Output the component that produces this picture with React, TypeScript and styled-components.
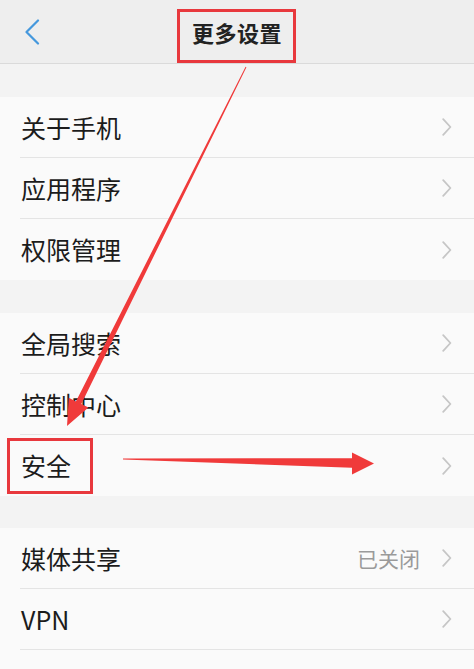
import React from "react";
import styled, { createGlobalStyle } from "styled-components";

const GlobalStyle = createGlobalStyle`
  html, body {
    margin: 0;
    padding: 0;
    background: #f3f3f3;
    overflow: hidden;
  }
  body {
    font-family: "Noto Sans CJK SC", "Noto Sans", sans-serif;
    -webkit-font-smoothing: antialiased;
  }
`;

const Screen = styled.div`
  position: relative;
  width: 474px;
  height: 669px;
  overflow: hidden;
  background: #f3f3f3;
`;

const Header = styled.header`
  box-sizing: border-box;
  height: 64px;
  display: grid;
  grid-template-columns: 80px 1fr 80px;
  align-items: center;
  background: #eeeeee;
  border-bottom: 1px solid #dadada;
`;

const BackButton = styled.div`
  display: flex;
  align-items: center;
  padding-left: 24px;
  height: 100%;
`;

const Title = styled.h1`
  margin: 0;
  text-align: center;
  font-size: 22px;
  font-weight: 700;
  color: #222;
  letter-spacing: 0.5px;
`;

const Gap = styled.div<{ h: number }>`
  height: ${(p) => p.h}px;
`;

const Group = styled.section<{ tail?: number }>`
  background: #fafafa;
  padding-bottom: ${(p) => p.tail ?? 0}px;
`;

const Row = styled.div<{ divider?: boolean }>`
  box-sizing: border-box;
  height: 61px;
  margin-left: 20px;
  padding: 0 22px 0 1px;
  display: flex;
  align-items: center;
  border-bottom: ${(p) => (p.divider ? "1px solid #e4e4e4" : "none")};
`;

const Label = styled.span`
  flex: 1;
  font-size: 25px;
  color: #1c1c1c;
  line-height: 1;
`;

const Value = styled.span`
  font-size: 21px;
  color: #9a9a9a;
  margin-right: 22px;
`;

const Overlay = styled.svg`
  position: absolute;
  top: 0;
  left: 0;
  pointer-events: none;
`;

const Chevron = () => (
  <svg width="10" height="18" viewBox="0 0 10 18">
    <polyline
      points="1.2,1.2 8.4,9 1.2,16.8"
      fill="none"
      stroke="#c6c6c6"
      strokeWidth="1.8"
      strokeLinecap="round"
      strokeLinejoin="round"
    />
  </svg>
);

type Item = { label: string; value?: string };

// last group continues below the fold, so its last visible row keeps a divider
const groups: { rows: Item[]; gap: number; more?: boolean }[] = [
  { rows: [{ label: "关于手机" }, { label: "应用程序" }, { label: "权限管理" }], gap: 33 },
  { rows: [{ label: "全局搜索" }, { label: "控制中心" }, { label: "安全" }], gap: 33 },
  { rows: [{ label: "媒体共享", value: "已关闭" }, { label: "VPN" }], gap: 32, more: true },
];

const App = () => {
  return (
    <Screen>
      <GlobalStyle />
      <Header>
        <BackButton>
          <svg width="16" height="26" viewBox="0 0 16 26">
            <polyline
              points="14,1.5 2.5,13 14,24.5"
              fill="none"
              stroke="#4598dd"
              strokeWidth="2.2"
              strokeLinecap="round"
              strokeLinejoin="round"
            />
          </svg>
        </BackButton>
        <Title>更多设置</Title>
        <div />
      </Header>

      {groups.map((group, gi) => (
        <React.Fragment key={gi}>
          <Gap h={group.gap} />
          <Group tail={group.more ? 40 : 0}>
            {group.rows.map((row, ri) => (
              <Row
                key={row.label}
                divider={group.more || ri < group.rows.length - 1}
              >
                <Label>{row.label}</Label>
                {row.value && <Value>{row.value}</Value>}
                <Chevron />
              </Row>
            ))}
          </Group>
        </React.Fragment>
      ))}

      <Overlay width="474" height="669" viewBox="0 0 474 669">
        <rect x="178.5" y="10.5" width="116" height="51" fill="none" stroke="#e8383d" strokeWidth="3" />
        <rect x="8.5" y="439.5" width="83" height="53" fill="none" stroke="#e8383d" strokeWidth="3" />
        <polygon
          points="245.6,66.8 75.9,401.4 68.8,397.8 67,426 88.4,407.6 81.3,404 246.4,67.2"
          fill="#f03a3a"
        />
        <polygon
          points="123,458.6 352,458.2 352,452.5 374,463.5 352,474.5 352,467.8 123,459.6"
          fill="#f03a3a"
        />
      </Overlay>
    </Screen>
  );
};

export default App;
